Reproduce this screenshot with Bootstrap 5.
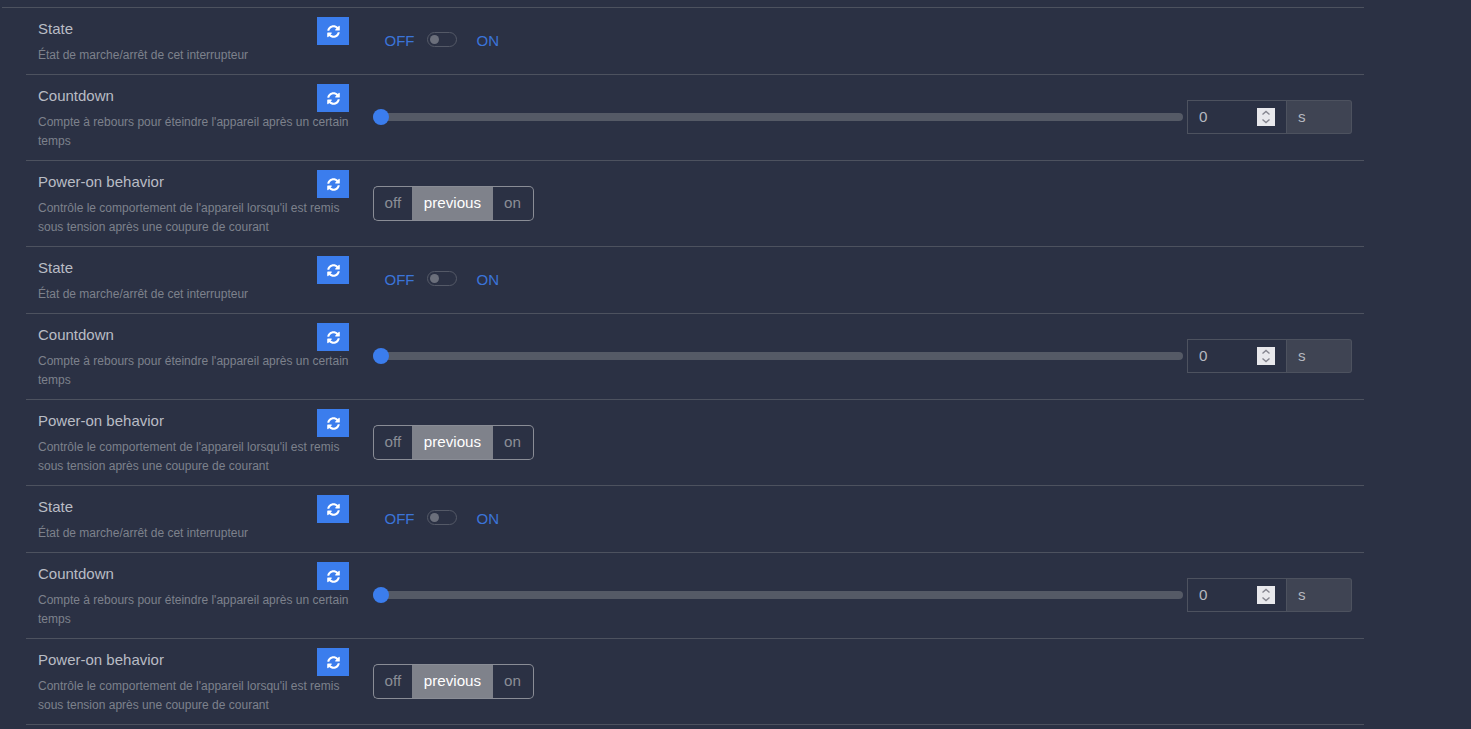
<!DOCTYPE html>
<html lang="en">
<head>
    <meta charset="UTF-8">
    <meta name="viewport" content="width=device-width, initial-scale=1.0">
    <title>Device features</title>
    <link href="https://cdn.jsdelivr.net/npm/bootstrap@5.3.0/dist/css/bootstrap.min.css" rel="stylesheet">
    <style>
        html, body {
            height: 100%;
            overflow: hidden;
        }
        body {
            background: #2b3144;
            font-family: "Liberation Sans", Arial, sans-serif;
            color: #b5b8c0;
        }
        .feature-list {
            margin: 7px 0 0 2px;
            width: 1362px;
            border-top: 1px solid #4d525f;
        }
        .feature-row {
            margin: 0 0 0 24px;
            width: 1338px;
            border-bottom: 1px solid #4d525f;
            --bs-gutter-x: 24px;
        }
        .feature-info {
            width: 334.5px;
            padding-top: 9px;
            position: relative;
            min-height: 66px;
        }
        .feature-control {
            width: 1003.5px;
            padding-top: 25px;
        }
        .feature-title {
            font-size: 15px;
            line-height: 22px;
            margin-top: 1px;
            color: #b9bcc4;
        }
        .feature-desc {
            font-size: 12px;
            line-height: 19.2px;
            color: #7d818c;
            margin-top: 6px;
            padding-bottom: 8.6px;
        }
        .refresh-btn {
            position: absolute;
            top: 9px;
            right: 12px;
            width: 32px;
            height: 28px;
            padding: 0;
            border: 0;
            border-radius: 0;
            background: #3b7ded;
            display: flex;
            align-items: center;
            justify-content: center;
        }
        .refresh-btn svg {
            width: 13px;
            height: 13px;
            margin-left: 1px;
            fill: #fff;
        }
        .toggle-wrap {
            padding-left: 12px;
            color: #3b74d8;
            font-size: 15px;
            line-height: 20px;
            margin-top: -2px;
        }
        .toggle-track {
            display: block;
            width: 30px;
            height: 15px;
            margin: -3px 20px 0 12px;
            border: 1px solid #545967;
            border-radius: 8px;
            padding: 2px 0 0 2px;
        }
        .toggle-knob {
            display: block;
            width: 9px;
            height: 9px;
            border-radius: 50%;
            background: #6b6f7b;
        }
        .range-input {
            flex: 1 1 auto;
            -webkit-appearance: none;
            appearance: none;
            height: 8px;
            margin-right: 4px;
            border-radius: 4px;
            background: #555a66;
        }
        .range-input::-webkit-slider-thumb {
            -webkit-appearance: none;
            width: 16px;
            height: 16px;
            border-radius: 50%;
            background: #3b7ded;
            border: 0;
        }
        .count-group {
            width: 165px;
            height: 34px;
            flex: none;
        }
        .count-group .form-control {
            background: #2b3144;
            border: 1px solid #4d525f;
            border-radius: 0;
            color: #b5b8c0;
            font-size: 15.2px;
            padding: 0 11px 2px;
            height: 34px;
            box-shadow: none;
        }
        .count-group input::-webkit-inner-spin-button {
            -webkit-appearance: none;
        }
        .spin-box {
            position: absolute;
            left: 71px;
            top: 8px;
            width: 18px;
            height: 18px;
            background: #e8e8ec;
            z-index: 6;
        }
        .spin-box svg {
            display: block;
            width: 18px;
            height: 18px;
            fill: none;
            stroke: #85858f;
            stroke-width: 1.4;
        }
        .count-group .input-group-text {
            width: 66px;
            background: #3f4453;
            border: 1px solid #4d525f;
            border-left: 0;
            border-radius: 0 3px 3px 0;
            color: #b5b8c0;
            font-size: 15.2px;
            padding: 0 11px 0 12px;
        }
        .mode-group {
            height: 35px;
        }
        .mode-group .btn {
            --bs-btn-border-radius: 5px;
            background: transparent;
            border: 1px solid #8a8d96;
            color: #8a8d96;
            font-size: 15.2px;
            line-height: 20px;
            padding: 5px 12px 7px;
            margin-left: 0;
        }
        .mode-group .btn-off {
            border-right: 0;
            padding-left: 11px;
        }
        .mode-group .btn-on {
            border-left: 0;
            padding-left: 12.400px;
        }
        .mode-group .btn.selected {
            background: #7f828b;
            border-color: #7f828b;
            border-top-color: #8a8d96;
            border-bottom-color: #8a8d96;
            border-left: 0;
            border-right: 0;
            padding-left: 11.600px;
            padding-right: 11.600px;
            color: #fff;
        }
    </style>
</head>
<body>
    <div class="feature-list" id="featureList"></div>

    <script>
        const syncIcon = '<svg viewBox="0 0 512 512"><path d="M370.72 133.28C339.458 104.008 298.888 87.962 255.848 88c-77.458.068-144.328 53.178-162.791 126.85-1.344 5.363-6.122 9.15-11.651 9.15H24.103c-7.498 0-13.194-6.807-11.807-14.176C33.933 94.924 134.813 8 256 8c66.448 0 126.791 26.136 171.315 68.685L463.03 40.97C478.149 25.851 504 36.559 504 57.941V192c0 13.255-10.745 24-24 24H345.941c-21.382 0-32.09-25.851-16.971-40.971l41.75-41.749zM32 296h134.059c21.382 0 32.09 25.851 16.971 40.971l-41.75 41.75c31.262 29.273 71.835 45.319 114.876 45.28 77.418-.07 144.315-53.144 162.787-126.849 1.344-5.363 6.122-9.15 11.651-9.15h57.304c7.498 0 13.194 6.807 11.807 14.176C478.067 417.076 377.187 504 256 504c-66.448 0-126.791-26.136-171.315-68.685L48.97 471.03C33.851 486.149 8 475.441 8 454.059V320c0-13.255 10.745-24 24-24z"/></svg>';
        const spinIcon = '<svg viewBox="0 0 18 18"><path d="M5.500 6.500 9 3.500l3.500 3M5.500 11.500 9 14.500l3.500-3"/></svg>';

        const features = [
            {
                title: 'State',
                desc: "État de marche/arrêt de cet interrupteur",
                control: `<div class="toggle-wrap d-flex align-items-center"><span>OFF</span><span class="toggle-track"><span class="toggle-knob"></span></span><span>ON</span></div>`
            },
            {
                title: 'Countdown',
                desc: "Compte à rebours pour éteindre l'appareil après un certain temps",
                control: `<div class="d-flex align-items-center"><input type="range" class="range-input" min="0" max="100" value="0"><div class="input-group count-group"><input type="number" class="form-control" value="0"><span class="spin-box">${spinIcon}</span><span class="input-group-text">s</span></div></div>`
            },
            {
                title: 'Power-on behavior',
                desc: "Contrôle le comportement de l'appareil lorsqu'il est remis sous tension après une coupure de courant",
                control: `<div class="btn-group mode-group"><button class="btn btn-off">off</button><button class="btn selected">previous</button><button class="btn btn-on">on</button></div>`
            }
        ];

        // Same three features repeat for each endpoint
        const list = document.getElementById('featureList');
        for (let i = 0; i < 3; i++) {
            features.forEach(f => {
                const row = document.createElement('div');
                row.className = 'row feature-row';
                row.innerHTML = `
                    <div class="feature-info">
                        <div class="feature-title">${f.title}</div>
                        <div class="feature-desc">${f.desc}</div>
                        <button class="refresh-btn">${syncIcon}</button>
                    </div>
                    <div class="feature-control">${f.control}</div>`;
                list.appendChild(row);
            });
        }
    </script>
    <script src="https://cdn.jsdelivr.net/npm/bootstrap@5.3.0/dist/js/bootstrap.bundle.min.js"></script>
</body>
</html>
